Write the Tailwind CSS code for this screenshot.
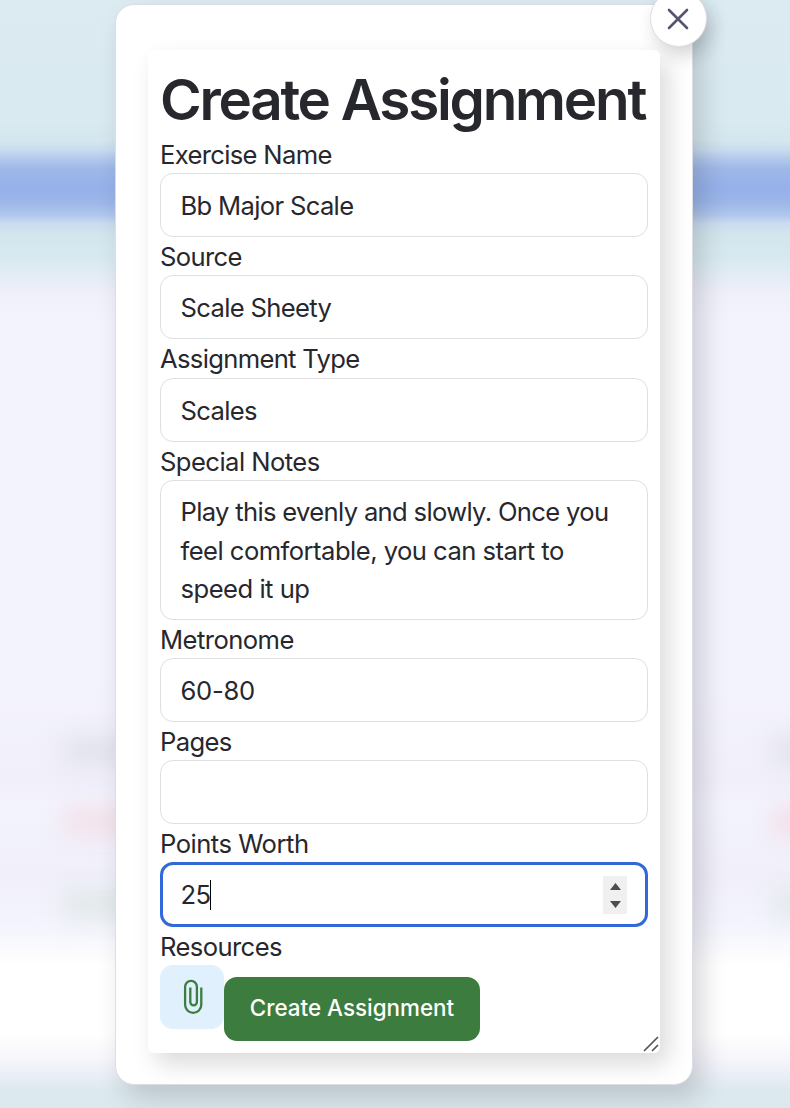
<!DOCTYPE html>
<html lang="en">
<head>
<meta charset="utf-8">
<title>Create Assignment</title>
<script src="https://cdn.jsdelivr.net/npm/@tailwindcss/browser@4"></script>
</head>
<body class="relative h-[1108px] w-[790px] overflow-hidden font-['Inter',sans-serif] text-[#27272e] bg-[linear-gradient(to_bottom,#dbebf1_0px,#d9eaf0_120px,#d5e7ee_140px,#c9dcef_150px,#b2c8ec_159px,#9fb8e9_169px,#98b3ea_182px,#96b1ea_190px,#9db7e9_203px,#b0c7ec_215px,#cbddee_224px,#d4e6ed_236px,#d8eaf0_260px,#e4ecf5_276px,#f0f0fa_296px,#f3f3fd_320px,#f3f3fd_680px,#f0effa_780px,#f3f3fd_805px,#f0effa_875px,#f3f3fd_915px,#f6f6fd_935px,#fff_965px,#fff_1035px,#f4f4fb_1062px,#dde9ef_1090px,#dbe9ee_1108px)]">
  <!-- Blurred page content behind the dialog -->
  <div class="absolute inset-0 overflow-hidden">
    <div class="absolute left-[64px] top-[738px] h-[26px] w-[100px] bg-[#e1e1ea] blur-[12px]"></div>
    <div class="absolute left-[64px] top-[808px] h-[26px] w-[100px] bg-[#f3dfe7] blur-[12px]"></div>
    <div class="absolute left-[64px] top-[891px] h-[26px] w-[100px] bg-[#dfe8e7] blur-[12px]"></div>
    <div class="absolute left-[774px] top-[738px] h-[26px] w-[60px] bg-[#e1e1ea] blur-[12px]"></div>
    <div class="absolute left-[774px] top-[808px] h-[26px] w-[60px] bg-[#f3dbe5] blur-[12px]"></div>
    <div class="absolute left-[774px] top-[891px] h-[26px] w-[60px] bg-[#dfe8e7] blur-[12px]"></div>
  </div>

  <main class="relative ml-[115px] mt-[4px] h-[1081px] w-[578px] rounded-[19px] border border-[#dddde3] bg-white px-8 pt-[45px] shadow-[9px_13px_26px_rgba(30,30,40,0.18)]">
    <button class="absolute -top-[15px] left-[534px] flex size-[57px] items-center justify-center rounded-full border border-[#dfdfe4] bg-white pr-[2px] shadow-[5px_8px_18px_rgba(30,30,40,0.2)]" aria-label="Close">
      <svg class="size-[22px]" viewBox="0 0 22 22" fill="none" stroke="#55556f" stroke-width="2.6" stroke-linecap="round"><path d="M2 2 20 20M20 2 2 20"/></svg>
    </button>
    <form class="relative h-[1003px] w-[512px] rounded-[6px] bg-white px-3 pt-[13px] shadow-[8px_11px_24px_rgba(0,0,0,0.15)]">
      <h1 class="h-[72px] whitespace-nowrap text-[56.6px] font-semibold leading-[74px] tracking-[-2.25px]"><span>Create Assignment</span></h1>
      <div class="flex flex-col text-[25.6px] leading-[38.4px] tracking-[-0.67px]">
        <label class="h-[38px] pt-px"><span>Exercise Name</span></label>
        <div class="h-16 w-[488px] rounded-[13px] border border-[#dfdfe3] pl-[19.5px] pt-[13px]"><span>Bb Major Scale</span></div>
        <label class="h-[38px] pt-px"><span>Source</span></label>
        <div class="h-16 w-[488px] rounded-[13px] border border-[#dfdfe3] pl-[19.5px] pt-[13px]"><span>Scale Sheety</span></div>
        <label class="h-[39px] pt-px"><span>Assignment Type</span></label>
        <div class="h-16 w-[488px] rounded-[13px] border border-[#dfdfe3] pl-[19.5px] pt-[13px]"><span>Scales</span></div>
        <label class="h-[38px] pt-px tracking-[-0.55px]"><span>Special Notes</span></label>
        <div class="h-[140px] w-[488px] whitespace-nowrap rounded-[13px] border border-[#dfdfe3] pl-[19.5px] pt-[12.3px]"><span>Play this evenly and slowly. Once you</span><br><span class="tracking-[-0.53px]">feel comfortable, you can start to</span><br><span class="tracking-[-0.5px]">speed it up</span></div>
        <label class="h-[38px] pt-px tracking-[-0.55px]"><span>Metronome</span></label>
        <div class="h-16 w-[488px] rounded-[13px] border border-[#dfdfe3] pl-[19.5px] pt-[13px] tracking-[-0.3px]"><span>60-80</span></div>
        <label class="h-[38px] pt-px"><span>Pages</span></label>
        <div class="h-16 w-[488px] rounded-[13px] border border-[#dfdfe3]"></div>
        <label class="h-[38px] pt-px tracking-[-0.5px]"><span>Points Worth</span></label>
        <div class="flex h-[65px] w-[488px] items-center rounded-[13px] border-[3px] border-[#316ad8] pl-[17.5px] pr-[18px]">
          <span class="pt-[2px]">25</span><i class="h-[30px] w-px bg-black"></i>
          <svg class="ml-auto h-[38px] w-6 bg-[#f0f0f0]" viewBox="0 0 24 38" fill="#4d4d4d"><path d="M7 14 12.500 7 18 14ZM7 25 12.500 32 18 25Z"/></svg>
        </div>
        <label class="h-[38px] pt-px tracking-[-0.6px]"><span>Resources</span></label>
      </div>
      <div class="flex">
        <button type="button" class="flex size-16 items-center justify-center rounded-[13px] bg-[#e0f0fd]" aria-label="Attach file">
          <svg class="ml-[2px] h-9 w-5" viewBox="0 0 20 36" fill="none" stroke="#3d7d3f" stroke-width="2.3"><path d="M18.300 8.500v17.300a8.100 8.100 0 0 1-16.200 0V7.800a5.900 5.900 0 0 1 11.800 0V23a3 3 0 0 1-6.600 0V8.500"/></svg>
        </button>
        <button type="button" class="mt-3 flex h-16 w-[256px] items-center justify-center whitespace-nowrap rounded-[13px] bg-[#3c7d3f] pb-[2px] text-[22.4px] font-[550] text-white"><span>Create Assignment</span></button>
      </div>
      <svg class="absolute bottom-0 right-0 size-[18px]" viewBox="0 0 18 18" stroke="#555" stroke-width="1.7"><path d="M2 16 16 2M10 16l6-6"/></svg>
    </form>
  </main>
</body>
</html>
